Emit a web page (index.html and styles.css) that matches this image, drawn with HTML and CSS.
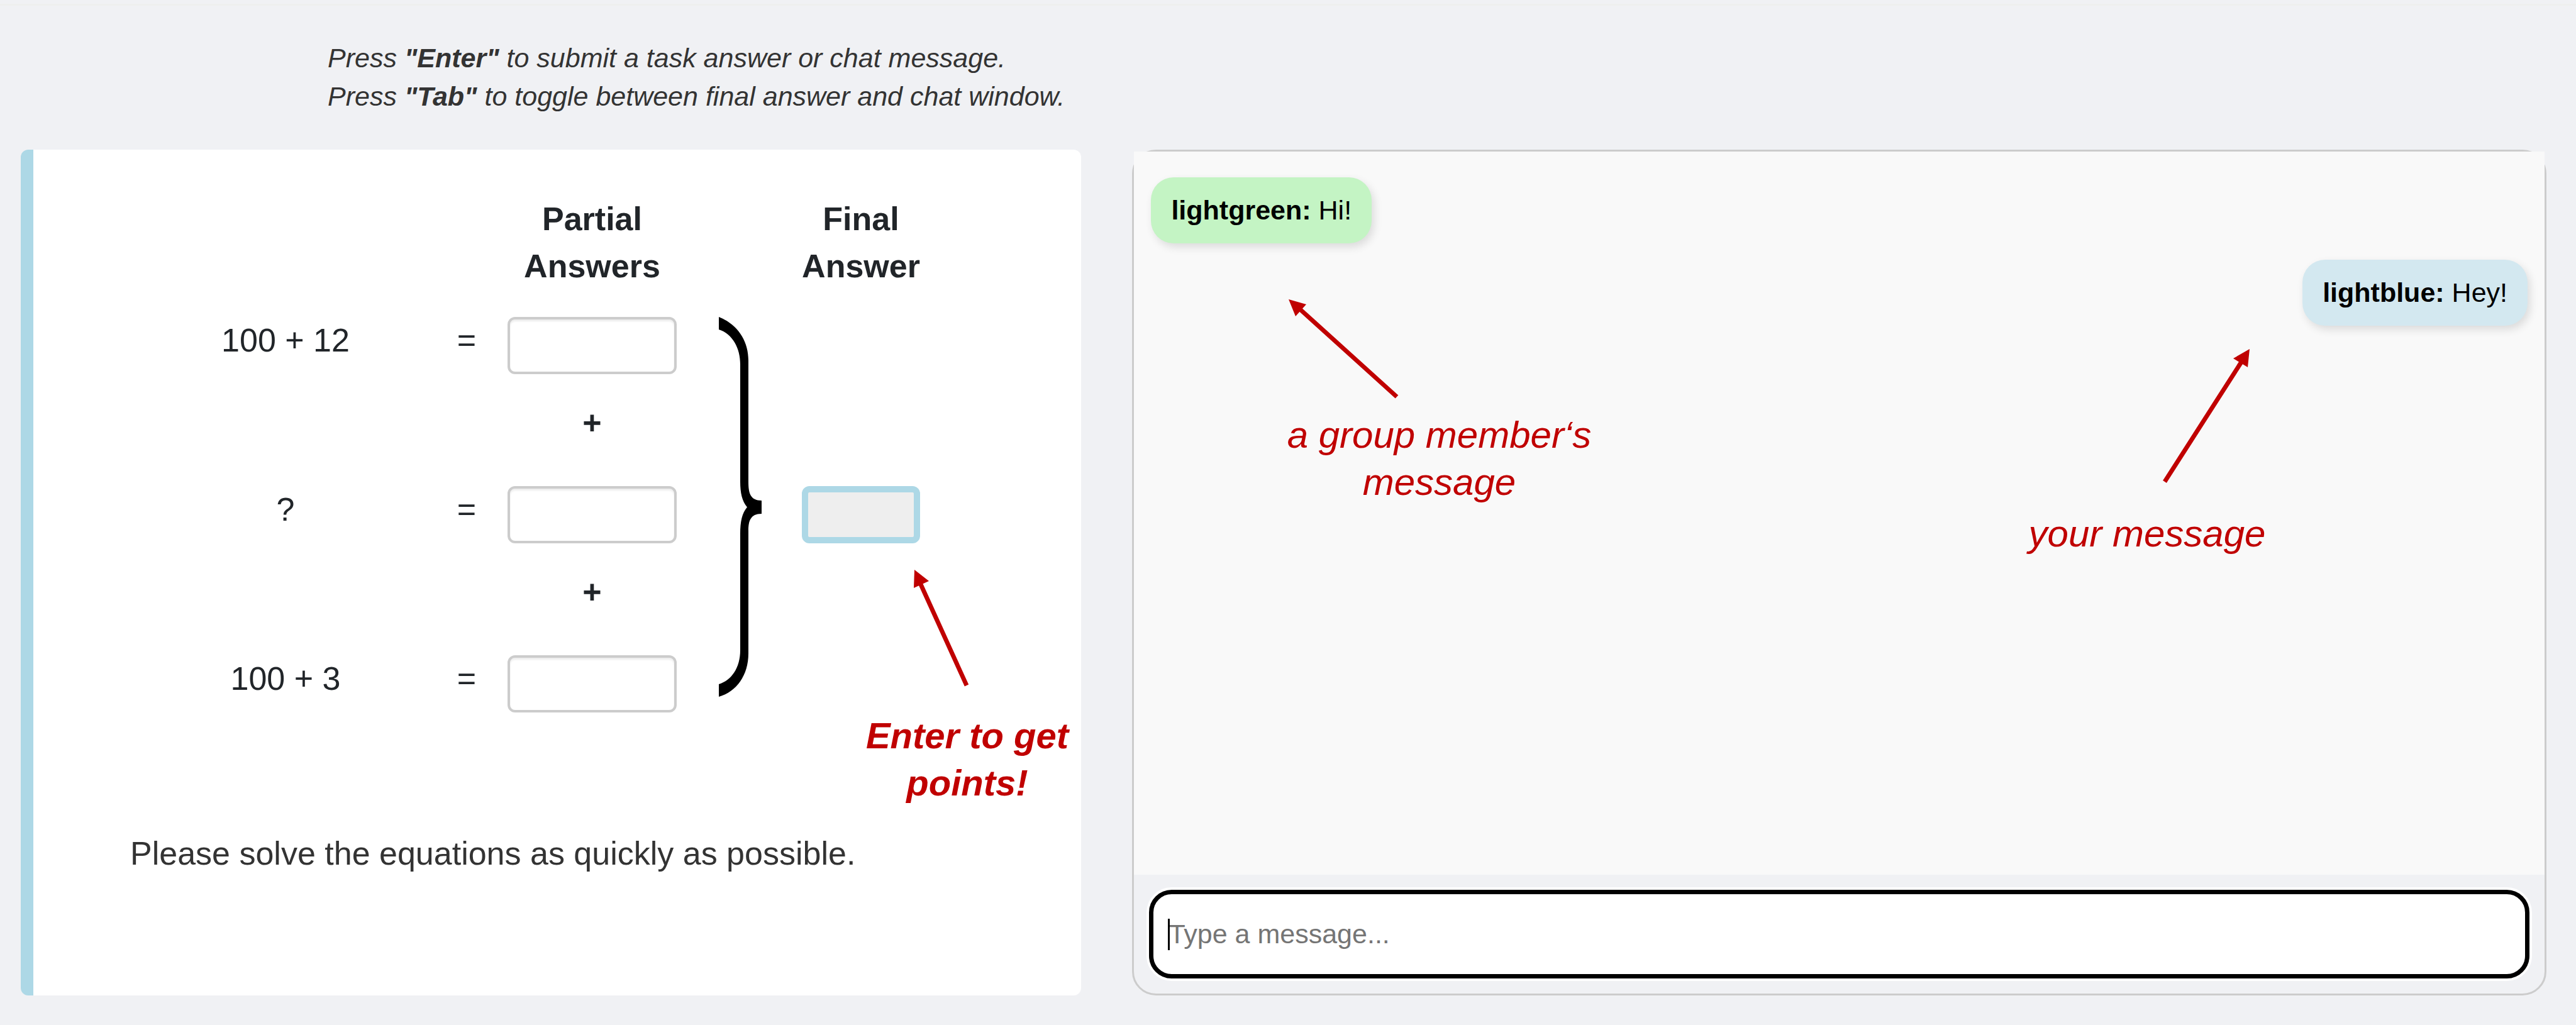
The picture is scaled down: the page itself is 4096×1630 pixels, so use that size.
FILE: index.html
```html
<!DOCTYPE html>
<html lang="en">
<head>
<meta charset="utf-8">
<title>Group task</title>
<link rel="stylesheet" href="styles.css">
</head>
<body>
<header class="instructions">
  <p>Press <strong>"Enter"</strong> to submit a task answer or chat message.</p>
  <p>Press <strong>"Tab"</strong> to toggle between final answer and chat window.</p>
</header>
<main class="workspace">
  <section class="task">
    <form class="equations">
      <h2 class="heading heading-partial">Partial<br>Answers</h2>
      <h2 class="heading heading-final">Final<br>Answer</h2>

      <label class="expression row-first" for="partial-1">100 + 12</label>
      <span class="equals row-first">=</span>
      <input class="answer row-first" id="partial-1" type="text">

      <span class="plus plus-upper">+</span>

      <label class="expression row-second" for="partial-2">?</label>
      <span class="equals row-second">=</span>
      <input class="answer row-second" id="partial-2" type="text">

      <span class="plus plus-lower">+</span>

      <label class="expression row-third" for="partial-3">100 + 3</label>
      <span class="equals row-third">=</span>
      <input class="answer row-third" id="partial-3" type="text">

      <svg class="brace" viewBox="0 0 68 604" aria-hidden="true">
        <path d="M0 0C30 12 47 38 47 69V262C47 280 50 292 68 292V313C50 313 47 325 47 340V535C47 570 28 596 0 604V584C20 578 34 558 34 530V345C34 325 37 312 45 302.500C37 293 34 280 34 262V75C34 50 22 27 0 20Z"/>
      </svg>
      <input class="final-answer" type="text" aria-label="Final Answer" disabled>
    </form>
    <p class="prompt">Please solve the equations as quickly as possible.</p>
    <div class="note note-final">
      <svg viewBox="0 0 340 232" width="340" height="232" aria-hidden="true">
        <path class="shaft" d="M169 190L95 27"/>
        <path class="head" d="M86 6L109 24L85 35Z"/>
      </svg>
      <p>Enter to get<br>points!</p>
    </div>
  </section>

  <section class="chat">
    <div class="messages">
      <p class="message message-member"><strong>lightgreen:</strong> Hi!</p>
      <p class="message message-own"><strong>lightblue:</strong> Hey!</p>
    </div>
    <form class="composer">
      <input class="composer-input" type="text" placeholder="Type a message..." aria-label="Type a message">
      <span class="caret"></span>
    </form>
    <div class="note note-member">
      <svg viewBox="0 0 520 184" width="520" height="184" aria-hidden="true">
        <path class="shaft" d="M193 161L36 19"/>
        <path class="head" d="M21 6L49 14L32 33Z"/>
      </svg>
      <p>a group member‘s<br>message</p>
    </div>
    <div class="note note-own">
      <svg viewBox="0 0 400 263" width="400" height="263" aria-hidden="true">
        <path class="shaft" d="M228 218L351 26"/>
        <path class="head" d="M363 7L337 22L360 36Z"/>
      </svg>
      <p>your message</p>
    </div>
  </section>
</main>
</body>
</html>
```

FILE: styles.css
```css
* {
  box-sizing: border-box;
}

body {
  display: flex;
  flex-direction: column;
  min-height: 100vh;
  margin: 0;
  padding-top: 6px;
  background: #f0f1f4;
  color: #212529;
  font-family: "Liberation Sans", Arial, sans-serif;
  font-size: 52px;
  line-height: 75px;
}

p,
h2 {
  margin: 0;
}

.instructions {
  padding: 53px 0 54px 521px;
  border-top: 3px solid #eeefee;
  color: #333;
  font-size: 43px;
  font-style: italic;
  line-height: 61px;
}

.workspace {
  display: grid;
  flex: 1;
  grid-template-columns: 3fr 4fr;
  gap: 81px;
  padding: 0 47px 47px 33px;
}

/* Task card */
.task {
  position: relative;
  padding: 73px 0 73px 154px;
  border-left: 20px solid #add8e6;
  border-radius: 12px;
  background: #fff;
}

.equations {
  display: grid;
  grid-template-columns: 494px 82px 24px 269px 67px 68px 64px 188px;
  grid-template-rows: 193px 91px 178px 91px 178px 91px;
  text-align: center;
}

.heading {
  grid-row: 1;
  font-size: inherit;
  font-weight: bold;
}

.heading-partial {
  grid-column: 4;
}

.heading-final {
  grid-column: 8;
}

.row-first {
  grid-row: 2;
}

.row-second {
  grid-row: 4;
}

.row-third {
  grid-row: 6;
}

.expression {
  grid-column: 1;
}

.equals {
  grid-column: 2;
}

.plus {
  grid-column: 4;
  align-self: center;
  padding-bottom: 24px;
  font-weight: bold;
}

.plus-upper {
  grid-row: 3;
}

.plus-lower {
  grid-row: 5;
}

.answer,
.final-answer {
  width: 100%;
  height: 91px;
  margin: 0;
  padding: 0 24px;
  border-radius: 12px;
  font: inherit;
}

.answer {
  grid-column: 4;
  border: 4px solid #ccc;
  background: #fff;
  box-shadow: inset 0 3px 3px rgba(0, 0, 0, 0.075);
}

.brace {
  grid-row: 2 / 7;
  grid-column: 6;
  width: 68px;
  height: 604px;
}

.final-answer {
  grid-row: 4;
  grid-column: 8;
  border: 10px solid #add8e6;
  background: #eee;
}

.prompt {
  margin-top: 187px;
  color: #333;
}

/* Chat panel */
.chat {
  position: relative;
  display: flex;
  flex-direction: column;
  border: 3px solid #ccc;
  border-radius: 38px;
}

.messages {
  display: flex;
  flex: 1;
  flex-direction: column;
  gap: 26px;
  padding: 41px 27px;
  background: #f9f9f9;
}

.message {
  padding: 22px 32px;
  border-radius: 36px;
  box-shadow: 4px 6px 14px rgba(0, 0, 0, 0.12);
  color: #000;
  font-size: 43px;
  line-height: 61px;
}

.message-member {
  align-self: flex-start;
  background: #c4f4c4;
}

.message-own {
  align-self: flex-end;
  background: #d3e8f0;
}

.composer {
  position: relative;
  padding: 24px;
}

.composer-input {
  display: block;
  width: 100%;
  height: 141px;
  padding: 0 24px;
  border: 7px solid #000;
  border-radius: 36px;
  outline: none;
  background: #fff;
  box-shadow: 0 0 0 4px #fff;
  font: inherit;
  font-size: 43px;
}

.composer-input::placeholder {
  color: #757575;
  opacity: 1;
}

.caret {
  position: absolute;
  top: 70px;
  left: 54px;
  width: 3px;
  height: 50px;
  background: #000;
}

/* Red call-outs drawn over the panels */
.note {
  position: absolute;
  color: #c00000;
  font-size: 60px;
  font-style: italic;
  text-align: center;
}

.note svg {
  display: block;
}

.shaft {
  fill: none;
  stroke: #c00000;
  stroke-width: 7;
}

.head {
  fill: #c00000;
}

.note-final {
  top: 662px;
  left: 1315px;
  font-size: 58px;
  font-weight: bold;
}

.note-member {
  top: 229px;
  left: 225px;
}

.note-own {
  top: 307px;
  right: 432px;
}
```
